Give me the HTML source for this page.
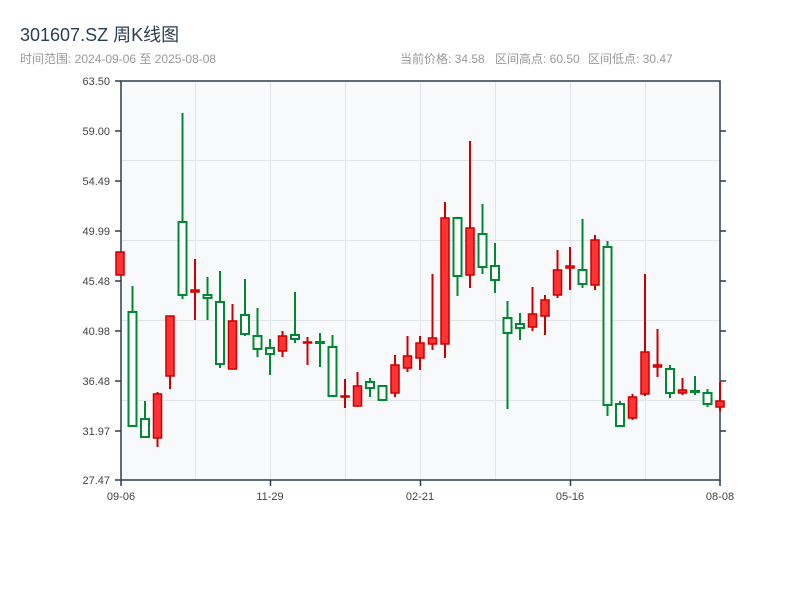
<!DOCTYPE html>
<html><head><meta charset="utf-8"><style>
html,body{margin:0;padding:0;background:#fff;width:800px;height:600px;overflow:hidden}
svg{display:block}
text{font-family:"Liberation Sans","Noto Sans CJK SC",sans-serif}
</style></head><body>
<svg width="800" height="600" viewBox="0 0 800 600" xmlns="http://www.w3.org/2000/svg">
<text x="20" y="41" font-size="18" fill="#2c3e50">301607.SZ 周K线图</text>
<text x="20" y="63" font-size="12" fill="#999">时间范围: 2024-09-06 至 2025-08-08</text>
<text x="400" y="63" font-size="12" fill="#999">当前价格: 34.58</text>
<text x="495" y="63" font-size="12" fill="#999">区间高点: 60.50</text>
<text x="588" y="63" font-size="12" fill="#999">区间低点: 30.47</text>
<rect x="121" y="81" width="599" height="399" fill="#f7f9fb"/>
<g stroke="#e1e4e8" stroke-width="1">
<line x1="121" y1="160.5" x2="720" y2="160.5"/><line x1="121" y1="240.5" x2="720" y2="240.5"/>
<line x1="121" y1="320.5" x2="720" y2="320.5"/><line x1="121" y1="400.5" x2="720" y2="400.5"/>
<line x1="195.5" y1="81" x2="195.5" y2="480"/><line x1="270.5" y1="81" x2="270.5" y2="480"/>
<line x1="345.5" y1="81" x2="345.5" y2="480"/><line x1="420.5" y1="81" x2="420.5" y2="480"/>
<line x1="495.5" y1="81" x2="495.5" y2="480"/><line x1="570.5" y1="81" x2="570.5" y2="480"/>
<line x1="645.5" y1="81" x2="645.5" y2="480"/>
</g>
<g stroke="#2c3e50" stroke-width="1.5" fill="none">
<rect x="121" y="81" width="599" height="399"/>
<path d="M115 81h6M115 131h6M115 181h6M115 231h6M115 281h6M115 331h6M115 381h6M115 431h6M115 480h6"/>
<path d="M720 131h6M720 181h6M720 231h6M720 281h6M720 331h6M720 381h6M720 431h6"/>
<path d="M121 480v6M270.5 480v6M420.5 480v6M570.5 480v6M720 480v6"/>
</g>
<g font-size="11" fill="#444" text-anchor="end">
<text x="110" y="85">63.50</text><text x="110" y="135">59.00</text><text x="110" y="185">54.49</text>
<text x="110" y="235">49.99</text><text x="110" y="285">45.48</text><text x="110" y="335">40.98</text>
<text x="110" y="385">36.48</text><text x="110" y="435">31.97</text><text x="110" y="484">27.47</text>
</g>
<g font-size="11" fill="#444" text-anchor="middle">
<text x="121" y="500">09-06</text><text x="270" y="500">11-29</text><text x="420" y="500">02-21</text>
<text x="570" y="500">05-16</text><text x="720" y="500">08-08</text>
</g>
<g stroke="#cc0000" stroke-width="2" fill="#ff3333">
<rect x="116" y="252" width="8" height="23" stroke-width="1.5"/>
<path d="M157.5 392V447"/><rect x="153.5" y="394" width="8" height="44" stroke-width="1.5"/>
<path d="M170 316V389"/><rect x="166" y="316" width="8" height="60" stroke-width="1.5"/>
<path d="M195 259V320"/><rect x="191" y="290" width="8" height="2" stroke-width="1.5"/>
<path d="M232.5 304V369"/><rect x="228.5" y="321" width="8" height="48" stroke-width="1.5"/>
<path d="M282.5 331V357"/><rect x="278.5" y="336" width="8" height="15" stroke-width="1.5"/>
<path d="M307.5 337V365"/><rect x="303.5" y="342" width="8" height="1" stroke-width="1.5"/>
<path d="M345 379V408"/><rect x="341" y="396" width="8" height="1" stroke-width="1.5"/>
<path d="M357.5 372V407"/><rect x="353.5" y="386" width="8" height="20" stroke-width="1.5"/>
<path d="M395 355V397"/><rect x="391" y="365" width="8" height="28" stroke-width="1.5"/>
<path d="M407.5 336V372"/><rect x="403.5" y="356" width="8" height="12" stroke-width="1.5"/>
<path d="M420 336V370"/><rect x="416" y="343" width="8" height="15" stroke-width="1.5"/>
<path d="M432.5 274V350"/><rect x="428.5" y="338" width="8" height="6" stroke-width="1.5"/>
<path d="M445 202V358"/><rect x="441" y="218" width="8" height="126" stroke-width="1.5"/>
<path d="M470 141V288"/><rect x="466" y="228" width="8" height="47" stroke-width="1.5"/>
<path d="M532.5 287V331"/><rect x="528.5" y="314" width="8" height="13" stroke-width="1.5"/>
<path d="M545 295V335"/><rect x="541" y="300" width="8" height="16" stroke-width="1.5"/>
<path d="M557.5 250V298"/><rect x="553.5" y="270" width="8" height="25" stroke-width="1.5"/>
<path d="M570 247V290"/><rect x="566" y="266" width="8" height="2" stroke-width="1.5"/>
<path d="M595 235V290"/><rect x="591" y="240" width="8" height="45" stroke-width="1.5"/>
<path d="M632.5 394V420"/><rect x="628.5" y="397" width="8" height="21" stroke-width="1.5"/>
<path d="M645 274V396"/><rect x="641" y="352" width="8" height="42" stroke-width="1.5"/>
<path d="M657.5 329V377"/><rect x="653.5" y="365" width="8" height="2" stroke-width="1.5"/>
<path d="M682.5 378V395"/><rect x="678.5" y="390" width="8" height="3" stroke-width="1.5"/>
<path d="M720 382V411"/><rect x="716" y="401" width="8" height="6" stroke-width="1.5"/>
</g>
<g stroke="#008833" stroke-width="2" fill="#fff">
<path d="M132.5 286V312"/><rect x="128.5" y="312" width="8" height="114"/>
<path d="M145 401V419"/><rect x="141" y="419" width="8" height="18"/>
<path d="M182.5 113V299"/><rect x="178.5" y="222" width="8" height="73"/>
<path d="M207.5 277V320"/><rect x="203.5" y="295" width="8" height="3"/>
<path d="M220 271V368"/><rect x="216" y="302" width="8" height="62"/>
<path d="M245 279V336"/><rect x="241" y="315" width="8" height="19"/>
<path d="M257.5 308V357"/><rect x="253.5" y="336" width="8" height="13"/>
<path d="M270 339V375"/><rect x="266" y="348" width="8" height="6"/>
<path d="M295 292V343"/><rect x="291" y="335" width="8" height="4"/>
<path d="M320 333V367"/><rect x="316" y="342" width="8" height="1"/>
<path d="M332.5 335V397"/><rect x="328.5" y="347" width="8" height="49"/>
<path d="M370 378V397"/><rect x="366" y="382" width="8" height="6"/>
<rect x="378.5" y="386" width="8" height="14"/>
<path d="M457.5 217V296"/><rect x="453.5" y="218" width="8" height="58"/>
<path d="M482.5 204V274"/><rect x="478.5" y="234" width="8" height="33"/>
<path d="M495 243V293"/><rect x="491" y="266" width="8" height="14"/>
<path d="M507.5 301V409"/><rect x="503.5" y="318" width="8" height="15"/>
<path d="M520 313V340"/><rect x="516" y="324" width="8" height="4"/>
<path d="M582.5 219V288"/><rect x="578.5" y="270" width="8" height="14"/>
<path d="M607.5 241V416"/><rect x="603.5" y="247" width="8" height="158"/>
<path d="M620 401V426"/><rect x="616" y="404" width="8" height="22"/>
<path d="M670 365V398"/><rect x="666" y="369" width="8" height="24"/>
<path d="M695 376V395"/><rect x="691" y="391" width="8" height="1"/>
<path d="M707.5 389V407"/><rect x="703.5" y="393" width="8" height="11"/>
</g>
</svg>
</body></html>
